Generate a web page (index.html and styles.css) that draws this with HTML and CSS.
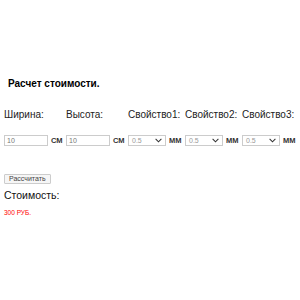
FILE: index.html
```html
<!DOCTYPE html>
<html>
<head>
<meta charset="utf-8">
<link rel="stylesheet" href="styles.css">
</head>
<body>
<div class="page">
  <h1 class="title">Расчет стоимости.</h1>
  <div class="grid">
    <div class="label">Ширина:</div>
    <div class="label">Высота:</div>
    <div class="label">Свойство1:</div>
    <div class="label">Свойство2:</div>
    <div class="label">Свойство3:</div>
    <div class="cell"><input class="txt" type="text" value="10"><span class="unit">СМ</span></div>
    <div class="cell"><input class="txt" type="text" value="10"><span class="unit">СМ</span></div>
    <div class="cell"><span class="sel"><span>0.5</span><svg class="chev" viewBox="0 0 8 5" width="7" height="5"><path d="M0.7 0.7 L4 4 L7.3 0.7" fill="none" stroke="#333" stroke-width="1.2"/></svg></span><span class="unit">ММ</span></div>
    <div class="cell"><span class="sel"><span>0.5</span><svg class="chev" viewBox="0 0 8 5" width="7" height="5"><path d="M0.7 0.7 L4 4 L7.3 0.7" fill="none" stroke="#333" stroke-width="1.2"/></svg></span><span class="unit">ММ</span></div>
    <div class="cell"><span class="sel"><span>0.5</span><svg class="chev" viewBox="0 0 8 5" width="7" height="5"><path d="M0.7 0.7 L4 4 L7.3 0.7" fill="none" stroke="#333" stroke-width="1.2"/></svg></span><span class="unit">ММ</span></div>
  </div>
  <button class="btn" type="button">Рассчитать</button>
  <div class="cost-label">Стоимость:</div>
  <div class="cost">300 РУБ.</div>
</div>
</body>
</html>
```
FILE: styles.css
```css
html, body {
  margin: 0;
  padding: 0;
  background: #fff;
}
body {
  font-family: "Liberation Sans", Arial, sans-serif;
  color: #111;
}
.page {
  padding: 77px 0 0 4px;
}
.title {
  margin: 0 0 0 4px;
  font-size: 10px;
  font-weight: bold;
  line-height: 14px;
  color: #000;
}
.grid {
  display: grid;
  grid-template-columns: 62px 62px 57px 57px auto;
  margin-top: 18px;
  row-gap: 14px;
}
.label {
  font-size: 10px;
  line-height: 12px;
  color: #222;
  white-space: nowrap;
}
.cell {
  display: flex;
  align-items: center;
  gap: 3px;
  height: 11px;
}
.txt {
  box-sizing: border-box;
  width: 44px;
  height: 11px;
  margin: 0;
  padding: 0 0 0 2px;
  border: 1px solid #ccc;
  font-family: "Liberation Sans", Arial, sans-serif;
  font-size: 7px;
  color: #777;
  outline: none;
}
.sel {
  box-sizing: border-box;
  width: 38px;
  height: 11px;
  border: 1px solid #ccc;
  display: flex;
  align-items: center;
  justify-content: space-between;
  padding: 0 3px 0 3px;
  font-size: 7px;
  color: #999;
}
.unit {
  font-size: 7.5px;
  font-weight: bold;
  color: #333;
}
.btn {
  display: block;
  margin: 28px 0 0 0;
  box-sizing: border-box;
  height: 10px;
  padding: 0 4px;
  border: 1px solid #ccc;
  border-radius: 1px;
  background: #f6f6f6;
  font-family: "Liberation Sans", Arial, sans-serif;
  font-size: 7px;
  line-height: 8px;
  color: #444;
}
.cost-label {
  margin-top: 5px;
  font-size: 10.5px;
  line-height: 13px;
  color: #111;
}
.cost {
  margin-top: 7px;
  font-size: 6.5px;
  line-height: 8px;
  color: #f00;
}
```
